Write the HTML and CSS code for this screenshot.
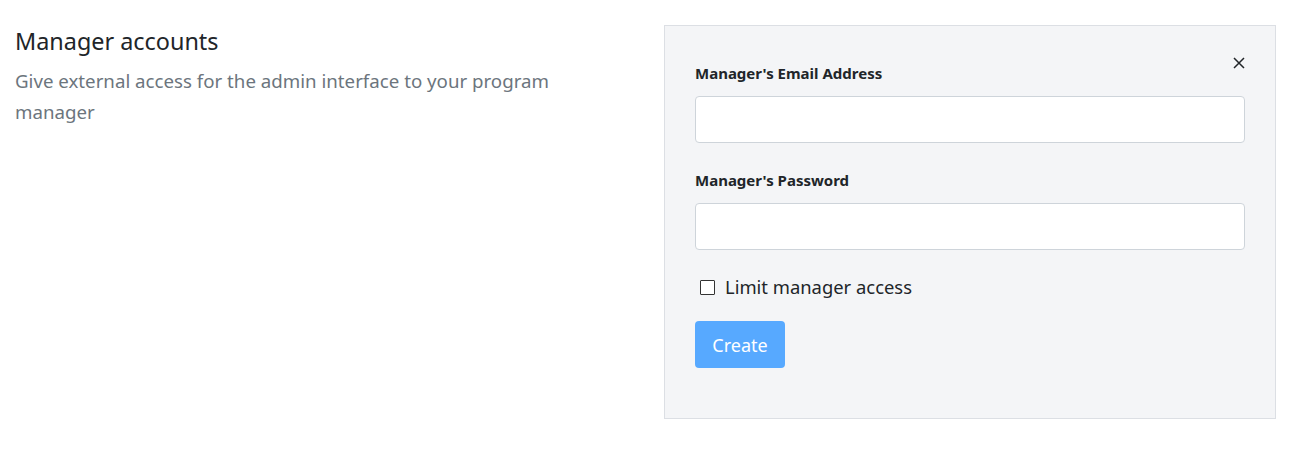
FILE: index.html
```html
<!DOCTYPE html>
<html lang="en">
<head>
<meta charset="utf-8">
<title>Manager accounts</title>
<link rel="stylesheet" href="styles.css">
</head>
<body>
<div class="page">
  <section class="intro">
    <h4 class="title">Manager accounts</h4>
    <p class="desc">Give external access for the admin interface to your program manager</p>
  </section>
  <section class="panel">
    <button class="close" type="button" aria-label="Close">
      <svg width="12" height="12" viewBox="0 0 12 12"><path d="M1 1L11 11M11 1L1 11" stroke="#212529" stroke-width="1.5" fill="none"/></svg>
    </button>
    <form class="form">
      <div class="field">
        <label class="label" for="email">Manager's Email Address</label>
        <input class="input" id="email" type="email">
      </div>
      <div class="field">
        <label class="label" for="pw">Manager's Password</label>
        <input class="input" id="pw" type="password">
      </div>
      <label class="check"><span class="box"></span><span>Limit manager access</span></label>
      <button class="btn" type="button">Create</button>
    </form>
  </section>
</div>
</body>
</html>
```
FILE: styles.css
```css
html, body { margin: 0; padding: 0; background: #fff; }
body { font-family: "Noto Sans", "Open Sans", sans-serif; color: #212529; }
.page {
  display: grid;
  grid-template-columns: 649px 612px;
  column-gap: 0;
  padding: 25px 14px 0 15px;
}
.intro { padding-top: 1px; }
.title {
  margin: 0;
  font-size: 23.4px;
  font-weight: 400;
  line-height: 30px;
  color: #212529;
}
.desc {
  margin: 9px 0 0;
  width: 580px;
  font-size: 18.7px;
  line-height: 31px;
  color: #6c757d;
}
.panel {
  position: relative;
  background: #f4f5f7;
  border: 1px solid #dcdfe4;
  height: 394px;
  box-sizing: border-box;
  padding: 35px 30px 0 30px;
}
.close {
  position: absolute;
  top: 30px;
  right: 29px;
  width: 14px;
  height: 14px;
  padding: 0;
  border: 0;
  background: none;
  display: flex;
  align-items: center;
  justify-content: center;
}
.form { display: flex; flex-direction: column; }
.field { display: flex; flex-direction: column; margin-bottom: 14px; }
.field + .field { margin-bottom: 0; }
.label {
  font-size: 15px;
  font-weight: 700;
  line-height: 24px;
  margin-bottom: 11px;
}
.field + .field .label { margin-top: 11px; }
.input {
  height: 47px;
  box-sizing: border-box;
  border: 1px solid #ced4da;
  border-radius: 4px;
  background: #fff;
  width: 100%;
  margin: 0;
}
.check {
  display: flex;
  align-items: center;
  margin-top: 25px;
  padding-left: 5px;
  font-size: 18.4px;
  line-height: 24px;
}
.box {
  width: 15px;
  height: 15px;
  border: 1px solid #333;
  border-radius: 1px;
  background: #fff;
  margin-right: 10px;
  box-sizing: border-box;
}
.btn {
  align-self: flex-start;
  margin-top: 22px;
  width: 90px;
  height: 47px;
  border: 0;
  border-radius: 4px;
  background: #57a9ff;
  color: #fff;
  font-family: inherit;
  font-size: 18px;
  padding: 0;
}
```
